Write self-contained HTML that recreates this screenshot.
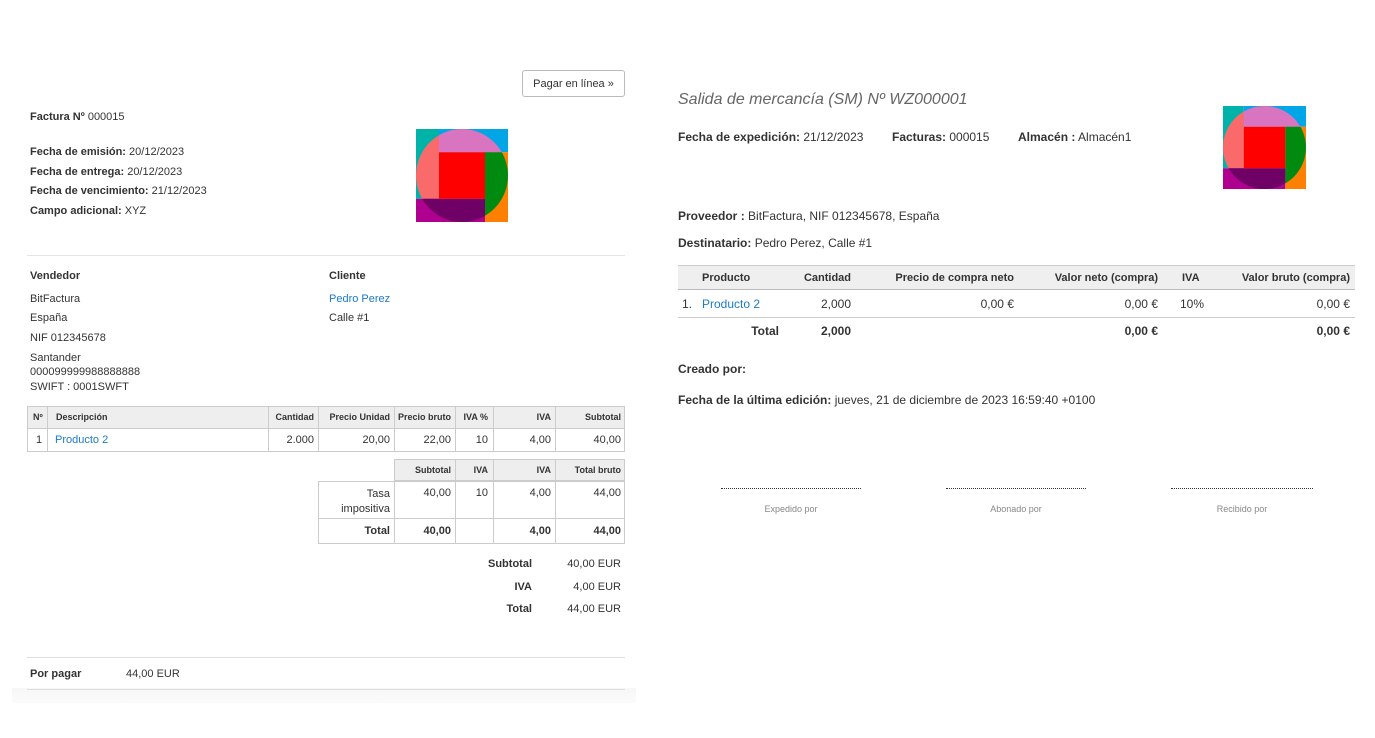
<!DOCTYPE html>
<html><head><meta charset="utf-8"><style>
*{margin:0;padding:0;box-sizing:border-box}
body{width:1375px;height:738px;background:#fff;position:relative;overflow:hidden;font-family:"Liberation Sans",Arial,sans-serif;color:#333}
.t{position:absolute;white-space:nowrap;font-size:11px;line-height:13px}
.b{font-weight:bold}
.r{text-align:right}
.R{font-size:12px;line-height:14px;color:#333}
.a{color:#1a7bc9 !important}
.box{position:absolute;border:1px solid #ccc}
.hl{position:absolute;height:1px;background:#ddd}
.vl{position:absolute;width:1px;background:#ccc}
.s{font-size:9px}
.H{font-size:11px}
</style></head><body>
<div style="position:absolute;left:12px;top:688px;width:624px;height:15px;background:linear-gradient(#f7f7f7,#fbfbfb)"></div>

<div style="position:absolute;left:522px;top:70px;width:103px;height:27px;border:1px solid #bbb;border-radius:3px;font-size:11px;line-height:27px;text-align:center;color:#333">Pagar en línea »</div>

<div class="t" style="left:30px;top:111px"><b>Factura Nº</b> 000015</div>
<div class="t" style="left:30px;top:146px"><b>Fecha de emisión:</b> 20/12/2023</div>
<div class="t" style="left:30px;top:166px"><b>Fecha de entrega:</b> 20/12/2023</div>
<div class="t" style="left:30px;top:185px"><b>Fecha de vencimiento:</b> 21/12/2023</div>
<div class="t" style="left:30px;top:205px"><b>Campo adicional:</b> XYZ</div>

<svg style="position:absolute;left:416px;top:129px" width="92" height="93" viewBox="0 0 100 100" preserveAspectRatio="none">
<defs><clipPath id="c1"><circle cx="50" cy="50" r="50"/></clipPath></defs>
<rect x="0" y="0" width="25" height="75" fill="#00b3a8"/><rect x="25" y="0" width="75" height="25" fill="#00a6e6"/>
<rect x="75" y="25" width="25" height="75" fill="#ff8000"/><rect x="0" y="75" width="75" height="25" fill="#b0008f"/>
<g clip-path="url(#c1)"><rect x="0" y="0" width="25" height="75" fill="#fa6a6a"/><rect x="25" y="0" width="75" height="25" fill="#d874c0"/><rect x="75" y="25" width="25" height="75" fill="#008a10"/><rect x="0" y="75" width="75" height="25" fill="#6e0066"/></g>
<rect x="25" y="25" width="50" height="50" fill="#ff0000"/></svg>

<div class="hl" style="left:27px;top:255px;width:598px;background:#e5e5e5"></div>
<div class="t b" style="left:30px;top:270px">Vendedor</div>
<div class="t b" style="left:329px;top:270px">Cliente</div>
<div class="t" style="left:30px;top:293px">BitFactura</div>
<div class="t" style="left:30px;top:312px">España</div>
<div class="t" style="left:30px;top:332px">NIF 012345678</div>
<div class="t" style="left:30px;top:352px">Santander</div>
<div class="t" style="left:30px;top:366px">000099999988888888</div>
<div class="t" style="left:30px;top:381px">SWIFT : 0001SWFT</div>
<div class="t a" style="left:329px;top:293px">Pedro Perez</div>
<div class="t" style="left:329px;top:312px">Calle #1</div>

<div style="position:absolute;left:27px;top:406px;width:598px;height:22px;background:#eee"></div>
<div class="box" style="left:27px;top:406px;width:598px;height:46px"></div>
<div class="hl" style="left:27px;top:428px;width:598px;background:#ccc"></div>
<div class="vl" style="left:47px;top:406px;height:46px"></div>
<div class="vl" style="left:268px;top:406px;height:46px"></div>
<div class="vl" style="left:318px;top:406px;height:46px"></div>
<div class="vl" style="left:394px;top:406px;height:46px"></div>
<div class="vl" style="left:455px;top:406px;height:46px"></div>
<div class="vl" style="left:493px;top:406px;height:46px"></div>
<div class="vl" style="left:555px;top:406px;height:46px"></div>
<div class="t b s" style="left:33px;top:411px">Nº</div>
<div class="t b s" style="left:56px;top:411px">Descripción</div>
<div class="t b s r" style="right:1061px;top:411px">Cantidad</div>
<div class="t b s r" style="right:985px;top:411px">Precio Unidad</div>
<div class="t b s r" style="right:924px;top:411px">Precio bruto</div>
<div class="t b s r" style="right:887px;top:411px">IVA %</div>
<div class="t b s r" style="right:824px;top:411px">IVA</div>
<div class="t b s r" style="right:754px;top:411px">Subtotal</div>
<div class="t" style="left:36px;top:434px">1</div>
<div class="t a" style="left:55px;top:434px">Producto 2</div>
<div class="t r" style="right:1061px;top:434px">2.000</div>
<div class="t r" style="right:985px;top:434px">20,00</div>
<div class="t r" style="right:924px;top:434px">22,00</div>
<div class="t r" style="right:887px;top:434px">10</div>
<div class="t r" style="right:824px;top:434px">4,00</div>
<div class="t r" style="right:754px;top:434px">40,00</div>

<div style="position:absolute;left:394px;top:459px;width:231px;height:22px;background:#eee;border:1px solid #ccc"></div>
<div class="box" style="left:318px;top:481px;width:307px;height:63px;border-top:none"></div>
<div class="hl" style="left:318px;top:481px;width:307px;background:#ccc"></div>
<div class="hl" style="left:318px;top:518px;width:307px;background:#ccc"></div>
<div class="vl" style="left:394px;top:459px;height:85px"></div>
<div class="vl" style="left:455px;top:459px;height:85px"></div>
<div class="vl" style="left:493px;top:459px;height:85px"></div>
<div class="vl" style="left:555px;top:459px;height:85px"></div>
<div class="t b s r" style="right:924px;top:464px">Subtotal</div>
<div class="t b s r" style="right:887px;top:464px">IVA</div>
<div class="t b s r" style="right:824px;top:464px">IVA</div>
<div class="t b s r" style="right:754px;top:464px">Total bruto</div>
<div class="t r" style="right:985px;top:487px;line-height:15px">Tasa<br>impositiva</div>
<div class="t r" style="right:924px;top:487px">40,00</div>
<div class="t r" style="right:887px;top:487px">10</div>
<div class="t r" style="right:824px;top:487px">4,00</div>
<div class="t r" style="right:754px;top:487px">44,00</div>
<div class="t b r" style="right:985px;top:525px">Total</div>
<div class="t b r" style="right:924px;top:525px">40,00</div>
<div class="t b r" style="right:824px;top:525px">4,00</div>
<div class="t b r" style="right:754px;top:525px">44,00</div>

<div class="t b r" style="right:843px;top:558px">Subtotal</div><div class="t r" style="right:754px;top:558px">40,00 EUR</div>
<div class="t b r" style="right:843px;top:581px">IVA</div><div class="t r" style="right:754px;top:581px">4,00 EUR</div>
<div class="t b r" style="right:843px;top:603px">Total</div><div class="t r" style="right:754px;top:603px">44,00 EUR</div>

<div class="hl" style="left:27px;top:657px;width:598px"></div>
<div class="t b" style="left:30px;top:668px">Por pagar</div>
<div class="t" style="left:126px;top:668px">44,00 EUR</div>
<div class="hl" style="left:27px;top:689px;width:598px"></div>

<div class="t" style="left:678px;top:90px;font-size:16px;line-height:19px;font-style:italic;color:#666">Salida de mercancía (SM) Nº WZ000001</div>
<div class="t R" style="left:678px;top:130px"><b>Fecha de expedición:</b> 21/12/2023</div>
<div class="t R" style="left:892px;top:130px"><b>Facturas:</b> 000015</div>
<div class="t R" style="left:1018px;top:130px"><b>Almacén :</b> Almacén1</div>
<svg style="position:absolute;left:1223px;top:106px" width="83" height="83" viewBox="0 0 100 100" preserveAspectRatio="none">
<defs><clipPath id="c2"><circle cx="50" cy="50" r="50"/></clipPath></defs>
<rect x="0" y="0" width="25" height="75" fill="#00b3a8"/><rect x="25" y="0" width="75" height="25" fill="#00a6e6"/>
<rect x="75" y="25" width="25" height="75" fill="#ff8000"/><rect x="0" y="75" width="75" height="25" fill="#b0008f"/>
<g clip-path="url(#c2)"><rect x="0" y="0" width="25" height="75" fill="#fa6a6a"/><rect x="25" y="0" width="75" height="25" fill="#d874c0"/><rect x="75" y="25" width="25" height="75" fill="#008a10"/><rect x="0" y="75" width="75" height="25" fill="#6e0066"/></g>
<rect x="25" y="25" width="50" height="50" fill="#ff0000"/></svg>
<div class="t R" style="left:678px;top:209px"><b>Proveedor :</b> BitFactura, NIF 012345678, España</div>
<div class="t R" style="left:678px;top:236px"><b>Destinatario:</b> Pedro Perez, Calle #1</div>

<div style="position:absolute;left:678px;top:265px;width:677px;height:25px;background:#efefef;border-top:1px solid #ccc;border-bottom:1px solid #bbb"></div>
<div class="hl" style="left:678px;top:317px;width:677px;background:#ccc"></div>
<div class="t R H b" style="left:702px;top:271px">Producto</div>
<div class="t R H b r" style="right:524px;top:271px">Cantidad</div>
<div class="t R H b r" style="right:361px;top:271px">Precio de compra neto</div>
<div class="t R H b r" style="right:217px;top:271px">Valor neto (compra)</div>
<div class="t R H b" style="left:1182px;top:271px">IVA</div>
<div class="t R H b r" style="right:25px;top:271px">Valor bruto (compra)</div>
<div class="t R" style="left:682px;top:297px">1.</div>
<div class="t R a" style="left:702px;top:297px">Producto 2</div>
<div class="t R r" style="right:524px;top:297px">2,000</div>
<div class="t R r" style="right:361px;top:297px">0,00 €</div>
<div class="t R r" style="right:217px;top:297px">0,00 €</div>
<div class="t R" style="left:1180px;top:297px">10%</div>
<div class="t R r" style="right:25px;top:297px">0,00 €</div>
<div class="t R b r" style="right:596px;top:324px">Total</div>
<div class="t R b r" style="right:524px;top:324px">2,000</div>
<div class="t R b r" style="right:217px;top:324px">0,00 €</div>
<div class="t R b r" style="right:25px;top:324px">0,00 €</div>

<div class="t R b" style="left:678px;top:362px">Creado por:</div>
<div class="t R" style="left:678px;top:393px"><b>Fecha de la última edición:</b> jueves, 21 de diciembre de 2023 16:59:40 +0100</div>

<div style="position:absolute;left:721px;top:488px;width:140px;border-top:1px dotted #333"></div>
<div style="position:absolute;left:946px;top:488px;width:140px;border-top:1px dotted #333"></div>
<div style="position:absolute;left:1171px;top:488px;width:142px;border-top:1px dotted #333"></div>
<div class="t" style="left:721px;width:140px;text-align:center;top:503px;font-size:9px;color:#888">Expedido por</div>
<div class="t" style="left:946px;width:140px;text-align:center;top:503px;font-size:9px;color:#888">Abonado por</div>
<div class="t" style="left:1171px;width:142px;text-align:center;top:503px;font-size:9px;color:#888">Recibido por</div>
</body></html>
